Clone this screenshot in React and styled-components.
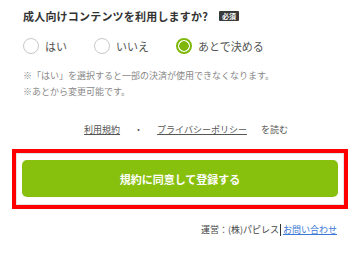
import React, { useState } from "react";
import styled, { createGlobalStyle } from "styled-components";

const GlobalStyle = createGlobalStyle`
  body {
    margin: 0;
    background: #fff;
    font-family: "Noto Sans CJK JP", "Noto Sans", sans-serif;
    color: #333;
  }
`;

const options = ["はい", "いいえ", "あとで決める"];

const App = () => {
  const [choice, setChoice] = useState(2);
  return (
    <Page>
      <GlobalStyle />
      <Question>
        <Title>成人向けコンテンツを利用しますか?</Title>
        <Badge>必須</Badge>
      </Question>
      <RadioRow>
        {options.map((label, i) => (
          <RadioLabel key={label} onClick={() => setChoice(i)}>
            <Circle checked={choice === i} />
            {label}
          </RadioLabel>
        ))}
      </RadioRow>
      <Notes>
        <p>※「はい」を選択すると一部の決済が使用できなくなります。</p>
        <p>※あとから変更可能です。</p>
      </Notes>
      <TermsRow>
        <TermLink href="#">利用規約</TermLink>
        <Dot>・</Dot>
        <TermLink href="#">プライバシーポリシー</TermLink>
        <span>を読む</span>
      </TermsRow>
      <Highlight>
        <SubmitBtn>規約に同意して登録する</SubmitBtn>
      </Highlight>
      <Footer>
        運営：(株)パピレス<Bar />
        <ContactLink href="#">お問い合わせ</ContactLink>
      </Footer>
    </Page>
  );
};
export default App;

const Page = styled.div`
  width: 360px;
  height: 255px;
  box-sizing: border-box;
  padding: 8px 23px 0 23px;
`;

const Question = styled.div`
  display: flex;
  align-items: center;
  height: 16px;
`;

const Title = styled.h2`
  margin: 0;
  font-size: 11px;
  font-weight: 700;
  color: #333;
  letter-spacing: 0.2px;
`;

const Badge = styled.span`
  margin-left: 11px;
  background: #3a3a3a;
  color: #fff;
  font-size: 7px;
  font-weight: 700;
  line-height: 10px;
  padding: 0 3px;
  border-radius: 1px;
`;

const RadioRow = styled.div`
  display: flex;
  align-items: center;
  margin-top: 14px;
  height: 16px;
`;

const RadioLabel = styled.label`
  display: flex;
  align-items: center;
  gap: 6px;
  margin-right: 27px;
  font-size: 11px;
  color: #555;
  cursor: pointer;
`;

const Circle = styled.span`
  width: 16px;
  height: 16px;
  box-sizing: border-box;
  border-radius: 50%;
  border: ${(p) => (p.checked ? "2.5px solid #80b80a" : "1.5px solid #c8c8c8")};
  background: ${(p) =>
    p.checked ? "radial-gradient(circle, #80b80a 0 4.5px, #fff 5px)" : "#fff"};
`;

const Notes = styled.div`
  margin-top: 14px;
  font-size: 9px;
  color: #888;

  p {
    margin: 0;
    line-height: 16px;
  }
`;

const TermsRow = styled.div`
  display: flex;
  justify-content: center;
  align-items: center;
  margin-top: 23px;
  padding-left: 12px;
  font-size: 9px;
  color: #555;
  gap: 14px;
`;

const TermLink = styled.a`
  color: #555;
  text-decoration: underline;
`;

const Dot = styled.span`
  color: #555;
`;

const Highlight = styled.div`
  margin: 13px -11px 0;
  border: 4px solid #ff0000;
  padding: 7px 6px 8px;
  box-shadow: inset 0 0 0 1px #e4e4e4;
`;

const SubmitBtn = styled.button`
  display: block;
  width: 100%;
  height: 37px;
  border: none;
  border-radius: 5px;
  background: #88c00e;
  color: #fff;
  font-family: inherit;
  font-size: 11px;
  font-weight: 700;
  cursor: pointer;
`;

const Footer = styled.div`
  display: flex;
  justify-content: flex-end;
  align-items: center;
  margin-top: 14px;
  font-size: 9px;
  color: #444;
`;

const Bar = styled.span`
  display: inline-block;
  width: 1px;
  height: 12px;
  background: #333;
  margin: 0 2px 0 1px;
`;

const ContactLink = styled.a`
  color: #3b78d8;
  text-decoration: underline;
`;
